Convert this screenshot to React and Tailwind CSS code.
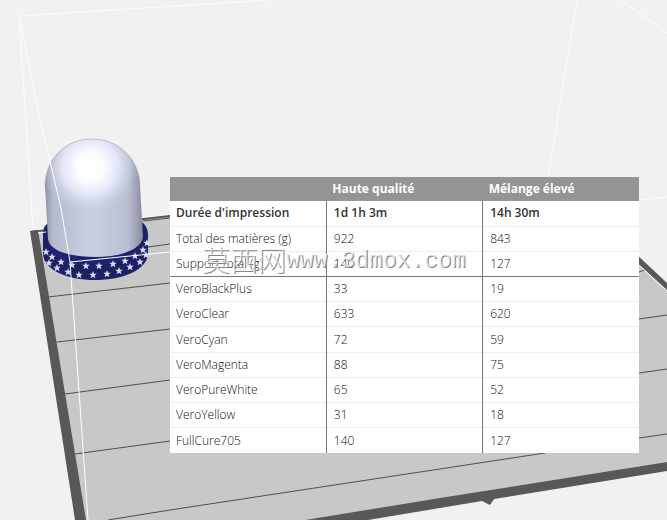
import React from 'react';

const rows = [
  { label: "Durée d'impression", high: '1d 1h 3m', mix: '14h 30m', bold: true },
  { label: 'Total des matières (g)', high: '922', mix: '843' },
  { label: 'Support total (g)', high: '140', mix: '127', divider: true },
  { label: 'VeroBlackPlus', high: '33', mix: '19' },
  { label: 'VeroClear', high: '633', mix: '620' },
  { label: 'VeroCyan', high: '72', mix: '59' },
  { label: 'VeroMagenta', high: '88', mix: '75' },
  { label: 'VeroPureWhite', high: '65', mix: '52' },
  { label: 'VeroYellow', high: '31', mix: '18' },
  { label: 'FullCure705', high: '140', mix: '127' },
];

// Star centres on the band, upper ring then lower ring
const stars = [
  [46, 252], [52, 257], [61, 262], [72, 265], [86, 266], [99, 266], [113, 264], [125, 261], [135, 256], [143, 250], [147, 243],
  [49, 263], [57, 268], [68, 272], [79, 275], [93, 275], [107, 274], [119, 271], [130, 267], [140, 262], [146, 255],
];

const Scene = () => (
  <svg
    className="absolute inset-0 h-full w-full"
    viewBox="0 0 667 520"
    preserveAspectRatio="xMidYMid slice"
    aria-hidden="true"
  >
    <defs>
      <linearGradient id="body" x1="0" x2="1" y1="0" y2="0">
        <stop offset="0" stopColor="#8f95a6" />
        <stop offset="0.08" stopColor="#b4b9cb" />
        <stop offset="0.45" stopColor="#cbd0e1" />
        <stop offset="0.85" stopColor="#b9bed2" />
        <stop offset="1" stopColor="#858a9d" />
      </linearGradient>
      <radialGradient id="shine" gradientUnits="userSpaceOnUse" cx="90" cy="167" r="48">
        <stop offset="0" stopColor="#ffffff" />
        <stop offset="0.3" stopColor="#fbfcff" />
        <stop offset="0.6" stopColor="#e6ebfa" stopOpacity="0.85" />
        <stop offset="1" stopColor="#c4c9da" stopOpacity="0" />
      </radialGradient>
      <path id="star" d="M0-4 1-1.2 3.8-1.2 1.6.6 2.4 3.3 0 1.7-2.4 3.3-1.6.6-3.8-1.2-1-1.2Z" />
    </defs>

    {/* Build tray */}
    <path d="M31 231 170 216 590 211 667 283V462L305 520H80Z" fill="#c8c8c8" />
    <path d="M30 231 38 230 86 520H75Z" fill="#585858" />
    <path d="M31 231 170 215V217L38 232Z" fill="#555" />
    <path d="M636 254 667 283V290L636 262Z" fill="#585858" />
    <path d="M305 520 440 498 667 462V471L494 499 490 505 482 501 368 520Z" fill="#585858" />
    <g fill="none" stroke="#4f4f4f" strokeWidth="1">
      <path d="M143 221 170 218M148 247 170 244M48 297 170 283M57 342 170 329M65 394 170 380M75 454 170 441" />
      <path d="M108 520 170 510 420 472 545 453" />
      <path d="M639 272 645 270M639 319 667 315M639 373 667 369M639 438 667 434" />
    </g>

    {/* Printed part */}
    <path d="M43 234C43 226 47 222 56 220H138C144 222 149 228 148 238V254C147 270 123 280 95 280S44 270 43 254Z" fill="#1d2064" />
    <path d="M44 238C48 258 70 265 95 265S146 254 148 238C143 252 120 258 96 258S50 252 44 238Z" fill="#1f2273" />
    <path d="M45 187C45 158 66 139 92 139S139 158 140 185L143 237C141 250 120 257 96 257S50 252 48 239Z" fill="url(#body)" />
    <path d="M45 187C45 158 66 139 92 139S139 158 140 185L141 216H46Z" fill="url(#shine)" />
    <path d="M45 187C45 158 66 139 92 139S139 158 140 185" fill="none" stroke="#a3a9b8" strokeOpacity="0.6" />
    <g fill="#d9def2">
      {stars.map(([x, y]) => (
        <use key={`${x}-${y}`} href="#star" x={x} y={y} />
      ))}
    </g>

    {/* Build volume outline */}
    <g fill="none" stroke="#fff">
      <path d="M268 0 19 16 33 230M19 16 40 120M577 0 548 177M621 0 667 33M639 200 667 197" opacity="0.8" />
      <path d="M40 120 52 170 61 208 70 262 88 520M70 262 170 252M38 233 46 232M639 265 667 291" />
    </g>
  </svg>
);

const App = () => {
  return (
    <main className="relative min-h-screen overflow-hidden bg-[#f1f1f1] pt-[177px] pr-7 pl-[170px] font-['Open_Sans','Noto_Sans',sans-serif]">
      <Scene />

      <div className="relative">
        <table className="h-[276px] w-full table-fixed border-collapse bg-white text-left text-[12px] leading-4 text-[#111]">
          <thead>
            <tr className="h-6 bg-[#949494] text-white">
              <th className="w-1/3 px-1.5"></th>
              <th className="px-1.5 font-bold">Haute qualité</th>
              <th className="px-1.5 font-bold">Mélange élevé</th>
            </tr>
          </thead>
          <tbody>
            {rows.map((row) => (
              <tr
                key={row.label}
                className={`h-[25px] border-b last:border-b-0 ${row.divider ? 'border-[#777]' : 'border-[#eee]'} ${row.bold ? 'font-semibold text-[#333]' : 'font-light'}`}
              >
                <td className="px-1.5">{row.label}</td>
                <td className="border-l border-l-[#777] px-[7px]">{row.high}</td>
                <td className="border-l border-l-[#777] px-[7px]">{row.mix}</td>
              </tr>
            ))}
          </tbody>
        </table>

        {/* Watermark */}
        <div className="pointer-events-none absolute top-16 left-8 flex items-end whitespace-nowrap text-white/70 [text-shadow:1px_1px_0_#888]">
          <span className="font-['Noto_Sans_CJK_SC',sans-serif] text-[28px] leading-9 font-light">莫西网</span>
          <span className="font-['Liberation_Mono',monospace] text-[23px] leading-8">www.3dmox.com</span>
        </div>
      </div>
    </main>
  );
};

export default App;
